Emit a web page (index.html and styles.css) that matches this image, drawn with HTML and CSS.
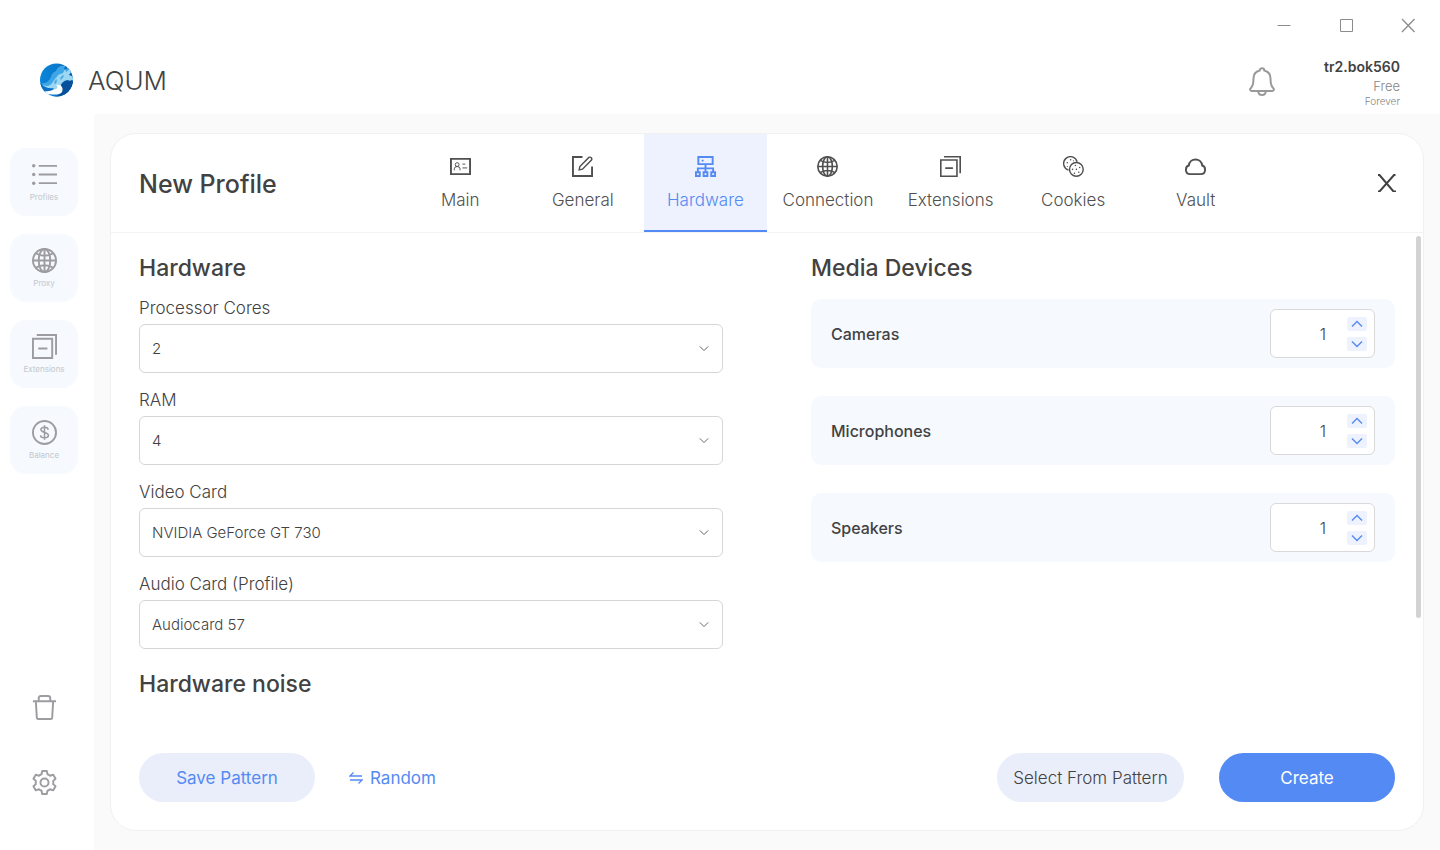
FILE: index.html
```html
<!DOCTYPE html>
<html lang="en">
<head>
<meta charset="utf-8">
<meta name="viewport" content="width=device-width, initial-scale=1">
<title>AQUM – New Profile</title>
<link rel="stylesheet" href="styles.css">
</head>
<body>
<svg class="sprite" aria-hidden="true">
  <symbol id="globe" viewBox="0 0 26 26">
    <circle cx="13" cy="13" r="12"/>
    <ellipse cx="13" cy="13" rx="6" ry="12"/>
    <path d="M13 1v24M1 13h24M4 5.500c5 3.300 13 3.300 18 0M4 20.500c5-3.300 13-3.300 18 0"/>
  </symbol>
  <symbol id="extensions" viewBox="0 0 26 26">
    <path d="M1 5h20v20H1zM6.500 15h9.500M5 1h20v20.500"/>
  </symbol>
  <symbol id="chevron-down" viewBox="0 0 12 8"><path d="M1 1.500l5 5 5-5"/></symbol>
  <symbol id="chevron-up" viewBox="0 0 12 8"><path d="M1 6.500l5-5 5 5"/></symbol>
</svg>
<div class="app">
  <header class="topbar">
    <div class="window-controls">
      <button type="button" aria-label="Minimize"><svg viewBox="0 0 14 14"><path d="M0.500 7.500h13"/></svg></button>
      <button type="button" aria-label="Maximize"><svg viewBox="0 0 14 14"><path d="M1.500 1.500h12v12h-12z"/></svg></button>
      <button type="button" aria-label="Close window"><svg viewBox="0 0 14 14"><path stroke-width="1.300" d="M1 1l12.500 13M13.500 1L1 14"/></svg></button>
    </div>
    <div class="brand-row">
      <div class="brand">
        <svg class="logo" viewBox="0 0 34 34" aria-hidden="true">
          <defs>
            <clipPath id="disc"><circle cx="16.500" cy="17" r="16.500"/></clipPath>
            <linearGradient id="sea" x1="0" y1="0" x2="1" y2="0"><stop offset="0" stop-color="#0a85d8"/><stop offset="0.550" stop-color="#0a78cc"/><stop offset="1" stop-color="#064d9d"/></linearGradient>
          </defs>
          <g clip-path="url(#disc)">
            <path fill="url(#sea)" d="M0 0h34v34H0z"/>
            <path fill="#3ea6e6" d="M2 20c4 1 7-2 9-6 1-4 3-5 5-6 1-4 5-6 9-5l-1 4 4-2 3 4-6 5-8 3-5 8-9 2z"/>
            <path fill="#9cd7f2" d="M3 22c4 2 7 1 9-2 2-2 3-5 5-6 1-3 4-3 6-4l2-4 1 3 4-3 1 3-2 3 5 2v5l-2-2-2 1-3-1c-4 1-5 4-6 6-1 3-4 5-7 6-4 1-9-2-11-7z"/>
            <path fill="#45a9e6" d="M14 20l2-4 1 1-1 4zM20 15l3-3 1 1-3 4z"/>
            <path fill="#07519c" d="M21 22c1-4 6-5 13-4v16H10c8 0 14-4 11-12z"/>
            <path fill="#0b6fc4" d="M0 20c3 4 9 6 14 5l-3 4H0z"/>
            <path fill="#fff" d="M0 28c5 1 11 0 16-2 2-1 2-3 0-4 5-1 8 3 6 7-2 3-8 3-13 2l1 3H0z"/>
          </g>
        </svg>
        <span class="brand-name">AQUM</span>
      </div>
      <button class="bell" type="button" aria-label="Notifications">
        <svg viewBox="0 0 26 30"><path d="M13 2.200c1.400 0 2.300 1 2.300 2.300 4 1 6.200 4 6.200 8 0 6 .6 7.600 2.600 9.400 1.400 1.300.8 3.100-1 3.100H2.900c-1.800 0-2.400-1.800-1-3.100 2-1.800 2.600-3.400 2.600-9.400 0-4 2.200-7 6.200-8 0-1.300.9-2.300 2.300-2.300zM9.200 25c0 5.300 7.600 5.300 7.600 0"/></svg>
      </button>
      <div class="account">
        <strong>tr2.bok560</strong>
        <span class="plan">Free</span>
        <span class="term">Forever</span>
      </div>
    </div>
  </header>

  <nav class="sidebar" aria-label="Sections">
    <button class="side-item" type="button">
      <svg viewBox="0 0 26 26"><path d="M7 4h19M7 13h19M7 22h19"/><g class="dots"><circle cx="1.800" cy="4" r="1.800"/><circle cx="1.800" cy="13" r="1.800"/><circle cx="1.800" cy="22" r="1.800"/></g></svg>
      <span>Profiles</span>
    </button>
    <button class="side-item" type="button"><svg><use href="#globe"/></svg><span>Proxy</span></button>
    <button class="side-item" type="button"><svg><use href="#extensions"/></svg><span>Extensions</span></button>
    <button class="side-item" type="button">
      <svg viewBox="0 0 26 26"><circle cx="13" cy="13" r="12"/><path stroke-width="1.600" d="M13 5.500v15M16.800 10.200c0-3.500-7.600-3.500-7.600-.2 0 3.800 7.900 2 7.900 5.900 0 3.500-8.200 3.500-8.200 0"/></svg>
      <span>Balance</span>
    </button>
    <div class="side-tools">
      <button type="button" aria-label="Trash"><svg viewBox="0 0 26 26"><path d="M1 6.500h24M7 6.500V3.500Q7 1 9.500 1h7Q19 1 19 3.500v3M4 6.500l1 17q.1 1.500 1.500 1.500h13q1.400 0 1.500-1.500l1-17"/></svg></button>
      <button type="button" aria-label="Settings"><svg viewBox="0 0 26 26"><circle cx="13" cy="13" r="4.200"/><path stroke-linejoin="round" d="M10.600 1h4.800l.7 3.400q1.500.5 2.700 1.600l3.300-1.100 2.400 4.200-2.500 2.200q.4 1.700 0 3.400l2.500 2.200-2.400 4.200-3.300-1.100q-1.200 1.100-2.700 1.600l-.7 3.400h-4.800l-.7-3.400q-1.500-.5-2.700-1.600l-3.300 1.100-2.400-4.200L4 14.700q-.4-1.700 0-3.400L1.500 9.100l2.400-4.200L7.200 6q1.200-1.100 2.700-1.600z"/></svg></button>
    </div>
  </nav>

  <main class="stage">
    <section class="panel">
      <div class="panel-head">
        <h1>New Profile</h1>
        <div class="tabs" role="tablist">
          <button role="tab" type="button"><svg viewBox="0 0 22 22"><path d="M1 3h20v16H1z"/><g class="fine"><circle cx="7.500" cy="9" r="2"/><path d="M4.500 15v-1.500q0-2.500 3-2.500t3 2.500V15M13 8.500h3M13 12.500h5"/></g></svg>Main</button>
          <button role="tab" type="button"><svg viewBox="0 0 22 22"><path d="M11 1H1v20h20V11"/><path class="thin" d="M7.500 14.500l.7-3.500 9.500-9.500q1.500-.8 2.500.3t.2 2.500L11 13.800z"/></svg>General</button>
          <button role="tab" type="button" aria-selected="true" class="active"><svg viewBox="0 0 22 22"><path d="M3.500 1h15v7.500h-15zM11 8.500V17M3 17v-4h16v4M1 17h4v4H1zM9 17h4v4H9zM17 17h4v4h-4zM7 4.800h2"/></svg>Hardware</button>
          <button role="tab" type="button"><svg><use href="#globe"/></svg>Connection</button>
          <button role="tab" type="button"><svg><use href="#extensions"/></svg>Extensions</button>
          <button role="tab" type="button"><svg class="thin" viewBox="0 0 22 22"><path d="M5.800 14.800A7.200 7.200 0 1 1 14.800 6"/><circle cx="14" cy="14" r="7.200"/><g class="dots"><circle cx="8" cy="4" r=".8"/><circle cx="4.500" cy="7" r=".8"/><circle cx="11" cy="5" r=".6"/><circle cx="4.500" cy="11" r=".6"/><circle cx="13" cy="10" r=".8"/><circle cx="17.500" cy="12" r=".8"/><circle cx="14" cy="14" r=".8"/><circle cx="10" cy="14" r=".8"/><circle cx="12" cy="18" r=".8"/><circle cx="16.500" cy="17" r=".8"/></g></svg>Cookies</button>
          <button role="tab" type="button"><svg viewBox="0 0 22 22"><path d="M5.500 19h11c6 0 5.500-8 1.500-9C17.200 1.500 4.800 1.500 4 10c-4 1-4.500 9 1.500 9z"/></svg>Vault</button>
        </div>
        <button class="close" type="button" aria-label="Close"><svg viewBox="0 0 18 18"><path d="M0 1h1.500l14 16.500H18M0 17.500h1.500L16 1h1.500"/></svg></button>
      </div>

      <div class="panel-body">
        <form class="column">
          <h2>Hardware</h2>
          <div class="field"><label for="cores">Processor Cores</label><div class="select"><select id="cores"><option>2</option></select><svg><use href="#chevron-down"/></svg></div></div>
          <div class="field"><label for="ram">RAM</label><div class="select"><select id="ram"><option>4</option></select><svg><use href="#chevron-down"/></svg></div></div>
          <div class="field"><label for="video">Video Card</label><div class="select"><select id="video"><option>NVIDIA GeForce GT 730</option></select><svg><use href="#chevron-down"/></svg></div></div>
          <div class="field"><label for="audio">Audio Card (Profile)</label><div class="select"><select id="audio"><option>Audiocard 57</option></select><svg><use href="#chevron-down"/></svg></div></div>
          <h2 class="next">Hardware noise</h2>
        </form>
        <form class="column">
          <h2>Media Devices</h2>
          <div class="devices">
            <div class="device"><label for="cameras">Cameras</label><div class="stepper"><input id="cameras" type="text" inputmode="numeric" value="1"><div class="steps"><button type="button" aria-label="More cameras"><svg><use href="#chevron-up"/></svg></button><button type="button" aria-label="Fewer cameras"><svg><use href="#chevron-down"/></svg></button></div></div></div>
            <div class="device"><label for="microphones">Microphones</label><div class="stepper"><input id="microphones" type="text" inputmode="numeric" value="1"><div class="steps"><button type="button" aria-label="More microphones"><svg><use href="#chevron-up"/></svg></button><button type="button" aria-label="Fewer microphones"><svg><use href="#chevron-down"/></svg></button></div></div></div>
            <div class="device"><label for="speakers">Speakers</label><div class="stepper"><input id="speakers" type="text" inputmode="numeric" value="1"><div class="steps"><button type="button" aria-label="More speakers"><svg><use href="#chevron-up"/></svg></button><button type="button" aria-label="Fewer speakers"><svg><use href="#chevron-down"/></svg></button></div></div></div>
          </div>
        </form>
        <div class="scrollbar"></div>
      </div>

      <div class="panel-foot">
        <button class="pill soft" type="button">Save Pattern</button>
        <button class="random" type="button"><svg viewBox="0 0 14 14"><path d="M13 5H1l3.500-3.500M1 9h12l-3.500 3.500"/></svg>Random</button>
        <button class="pill pattern" type="button">Select From Pattern</button>
        <button class="pill primary" type="button">Create</button>
      </div>
    </section>
  </main>
</div>
</body>
</html>
```
FILE: styles.css
```css
* { box-sizing: border-box; }

body {
  margin: 0;
  background: #fff;
  color: #424242;
  font-family: Inter, "Liberation Sans", sans-serif;
  font-size: 17px;
  font-weight: 300;
}

button, input, select { font: inherit; color: inherit; }
button { margin: 0; padding: 0; border: 0; background: none; cursor: pointer; }
svg { display: block; fill: none; stroke: currentColor; }
h1, h2 { margin: 0; font-size: 23px; font-weight: 500; line-height: 28px; }

.sprite { position: absolute; width: 0; height: 0; }

.app {
  display: grid;
  grid-template-columns: 94px 1fr;
  grid-template-rows: auto 1fr;
  height: 100vh;
}

/* Top bar */
.topbar { grid-column: 1 / -1; height: 114px; }
.window-controls {
  display: flex;
  justify-content: flex-end;
  gap: 48px;
  padding: 18px 25px 0;
  color: #8c8c8c;
}
.window-controls svg { width: 14px; height: 14px; overflow: visible; }
.brand-row { display: flex; padding: 26px 40px 0; }
.brand { display: flex; align-items: center; gap: 14px; height: 44px; margin-right: auto; }
.logo { width: 34px; height: 34px; stroke: none; }
.brand-name { font-size: 26px; }
.bell { width: 26px; height: 44px; padding-top: 2px; color: #999; stroke-width: 2; }
.bell svg { width: 26px; height: 30px; }
.account {
  display: flex;
  flex-direction: column;
  width: 125px;
  text-align: right;
  color: #858585;
}
.account strong { font-size: 14px; font-weight: 600; line-height: 18px; color: #424242; }
.plan { font-size: 13px; line-height: 20px; }
.term { font-size: 10px; line-height: 10px; }

/* Sidebar */
.sidebar {
  display: flex;
  flex-direction: column;
  gap: 18px;
  padding: 34px 16px 55px 10px;
  color: #9c9ca1;
  stroke-width: 2;
}
.side-item {
  display: flex;
  flex-direction: column;
  align-items: center;
  height: 68px;
  padding: 14px 0 0;
  border-radius: 16px;
  background: #f6f9fe;
  font-size: 8px;
  font-weight: 400;
}
.side-item span { margin-top: 5px; line-height: 10px; color: #c3c7cd; }
.sidebar svg { width: 25px; height: 25px; }
.dots { fill: currentColor; stroke: none; }
.side-tools {
  display: flex;
  flex-direction: column;
  align-items: center;
  gap: 50px;
  margin-top: auto;
}

/* Profile panel */
.stage { min-height: 0; padding: 19px 16px 19px; background: #fafafa; }
.panel {
  display: flex;
  flex-direction: column;
  height: 100%;
  border: 1px solid #f1f1f1;
  border-radius: 26px;
  background: #fff;
  overflow: hidden;
}
.panel-head {
  display: grid;
  grid-template-columns: 288px 1fr 166px;
  align-items: center;
  border-bottom: 1px solid #f3f3f3;
}
.panel-head h1 { padding: 2px 0 0 28px; font-size: 25px; }
.tabs { display: grid; grid-template-columns: repeat(7, 1fr); color: #505050; }
.tabs button {
  display: flex;
  flex-direction: column;
  align-items: center;
  gap: 12px;
  height: 98px;
  padding-top: 22px;
  border-bottom: 2px solid transparent;
  line-height: 22px;
}
.tabs svg { width: 21px; height: 21px; stroke-width: 2; }
.tabs .fine { stroke-width: 1; }
.tabs .thin { stroke-width: 1.5; }
.tabs .active { border-color: #548af3; background: #edf2fe; color: #548af3; }
.close { justify-self: end; margin-right: 27px; stroke-width: 2; }
.close svg { width: 18px; height: 18px; }

.panel-body {
  position: relative;
  display: grid;
  grid-template-columns: 1fr 1fr;
  gap: 88px;
  flex: 1;
  min-height: 0;
  padding: 21px 28px 0;
  overflow: hidden;
}
.column { min-width: 0; }
.field { margin-top: 15px; }
.field label { display: block; margin-bottom: 5px; line-height: 22px; }
.field + .field { margin-top: 16px; }
.select { display: grid; align-items: center; }
.select select, .select svg { grid-area: 1 / 1; }
.select select {
  width: 100%;
  height: 49px;
  padding: 0 40px 0 12px;
  border: 1px solid #d6d6d6;
  border-radius: 6px;
  background: #fff;
  appearance: none;
  font-size: 15px;
}
.select svg { justify-self: end; width: 10px; height: 7px; margin-right: 14px; color: #666; stroke-width: 1.2; pointer-events: none; }
.next { margin-top: 21px; }

.devices { display: grid; gap: 28px; margin-top: 17px; }
.device {
  display: flex;
  align-items: center;
  justify-content: space-between;
  padding: 10px 20px;
  border-radius: 10px;
  background: #f6f9fe;
  font-size: 16px;
  font-weight: 500;
}
.stepper {
  display: flex;
  align-items: center;
  gap: 21px;
  width: 105px;
  height: 49px;
  padding: 0 7px 0 12px;
  border: 1px solid #d9d9d9;
  border-radius: 6px;
  background: #fff;
}
.stepper input {
  flex: 1;
  min-width: 0;
  padding: 0;
  border: 0;
  background: none;
  font-weight: 300;
  text-align: right;
}
.steps { display: grid; gap: 6px; }
.steps button {
  display: grid;
  place-items: center;
  width: 20px;
  height: 14px;
  border-radius: 2px;
  background: #edf2fe;
  color: #548af3;
}
.steps svg { width: 12px; height: 8px; stroke-width: 1.4; }
.scrollbar {
  position: absolute;
  top: 3px;
  right: 2px;
  width: 5px;
  height: 76%;
  border-radius: 3px;
  background: #d3d3d3;
}

.panel-foot { display: flex; align-items: center; padding: 18px 28px 28px; }
.pill { height: 49px; min-width: 176px; padding: 0 14px; border-radius: 25px; }
.soft { background: #eaeefa; color: #548af3; }
.random { display: flex; align-items: center; gap: 7px; margin: 0 auto 0 34px; color: #548af3; }
.soft, .random, .primary { font-weight: 400; }
.random svg { width: 14px; height: 14px; stroke-width: 1.3; }
.pattern { min-width: 187px; background: #eaeefa; }
.primary { margin-left: 35px; background: #548af3; color: #fff; }
```
